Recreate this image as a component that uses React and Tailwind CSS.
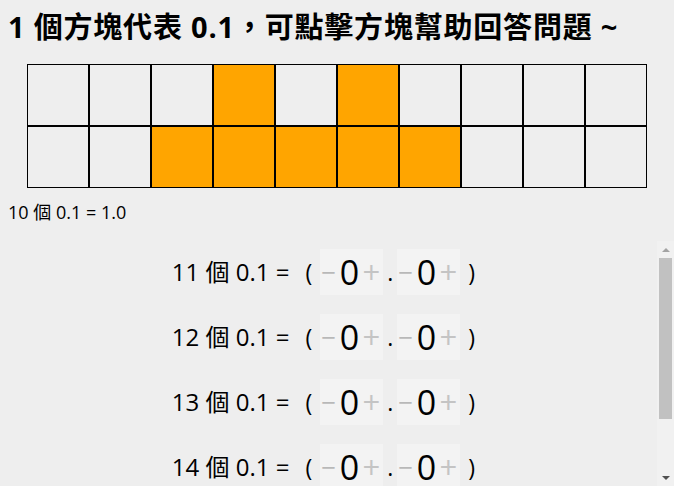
import React, { useState } from 'react';

const FONT = { fontFamily: '"Open Sans", "Noto Sans CJK TC", sans-serif' };

function Digit() {
  return (
    <span className="inline-flex items-center justify-between bg-[#f3f3f3] w-[63px] h-[46px] pl-[1px] pr-[3px]">
      <span className="text-[#b8b8b8] text-[26px] leading-none">−</span>
      <span className="text-black text-[34px] leading-none">0</span>
      <span className="text-[#c4c4c4] text-[31px] leading-none">+</span>
    </span>
  );
}

function Scrollbar() {
  return (
    <div className="w-[17px] shrink-0 bg-[#f1f1f1] flex flex-col items-center">
      <div className="h-[17px] w-full flex items-center justify-center">
        <div className="w-0 h-0 border-x-[4px] border-x-transparent border-b-[4px] border-b-[#a3a3a3]" />
      </div>
      <div className="w-[13px] h-[161px] bg-[#c1c1c1]" />
      <div className="flex-1" />
      <div className="h-[17px] w-full flex items-center justify-center">
        <div className="w-0 h-0 border-x-[4px] border-x-transparent border-t-[4px] border-t-[#505050]" />
      </div>
    </div>
  );
}

export default function App() {
  const [cells, setCells] = useState([
    [0, 0, 0, 1, 0, 1, 0, 0, 0, 0],
    [0, 0, 1, 1, 1, 1, 1, 0, 0, 0],
  ]);

  const toggle = (r, c) => {
    setCells(cells.map((row, ri) => row.map((v, ci) => (ri === r && ci === c ? 1 - v : v))));
  };

  return (
    <div className="w-[674px] h-[486px] bg-[#eeeeee] text-black overflow-hidden flex flex-col" style={FONT}>
      <h1 className="text-[29px] font-bold leading-none pl-2 pt-[12px] h-[64px] whitespace-nowrap tracking-[0.8px]">
        1 個方塊代表 0.1，可點擊方塊幫助回答問題 ~
      </h1>
      <div className="pl-[27px]">
        <table style={{ borderSpacing: 0, borderCollapse: 'separate' }}>
          <tbody>
            {cells.map((row, r) => (
              <tr key={r}>
                {row.map((v, c) => (
                  <td
                    key={c}
                    onClick={() => toggle(r, c)}
                    className={`w-[62px] h-[62px] p-0 border border-black ${v ? 'bg-[#ffa500]' : 'bg-[#eeeeee]'}`}
                  />
                ))}
              </tr>
            ))}
          </tbody>
        </table>
      </div>
      <div className="pl-2 pt-[15px] text-[18px] leading-none h-[53px]">10 個 0.1 = 1.0</div>
      <div className="flex-1 flex min-h-0">
        <div className="flex-1 overflow-hidden">
          {[11, 12, 13, 14, 15].map((n) => (
            <div key={n} className="h-[65px] flex items-center justify-center pr-[10px] pb-[3px]">
              <span className="text-[24px] mr-[16px]">{n} 個 0.1 =</span>
              <span className="text-[23px] mr-[8px]">(</span>
              <Digit />
              <span className="text-[23px] mx-[4px]">.</span>
              <Digit />
              <span className="text-[23px] ml-[8px]">)</span>
            </div>
          ))}
        </div>
        <Scrollbar />
      </div>
    </div>
  );
}
